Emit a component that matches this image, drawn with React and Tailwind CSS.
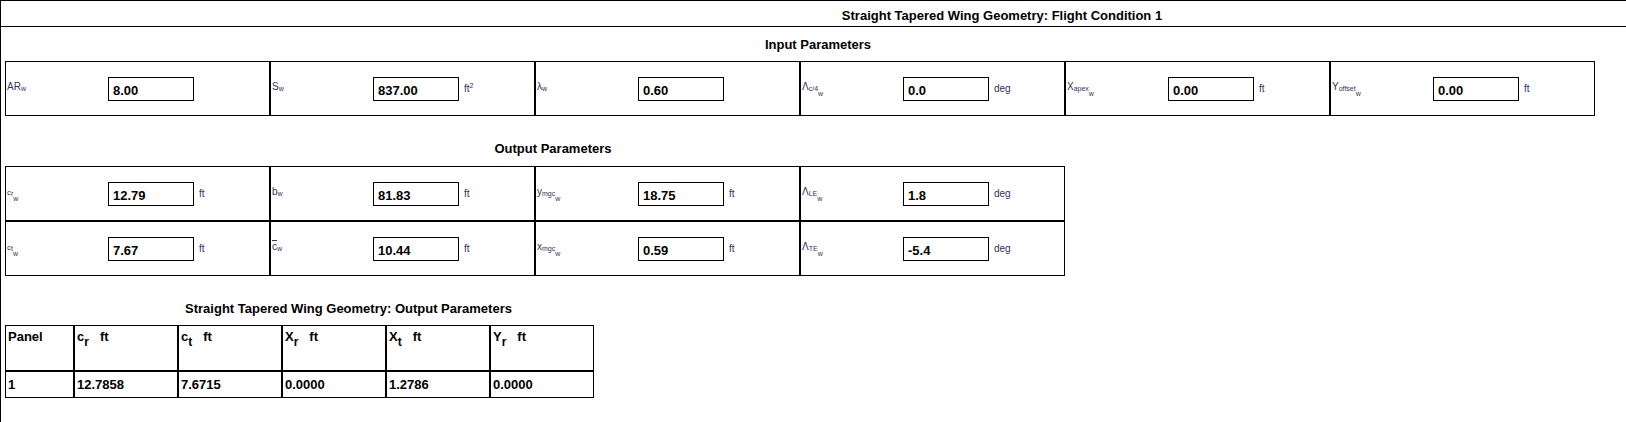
import React from "react";

function Sym({ base, sub, low, sup, baseCls = "text-[10px]", over = false, lowTop = "top-[6px]" }) {
  return (
    <span className="text-[#2e3560] whitespace-nowrap leading-none text-[10px]">
      <span className={baseCls + (over ? " overline" : "")}>{base}</span>
      {sub && <span className="text-[7px] relative top-[1px]">{sub}</span>}
      {low && <span className={"text-[7px] relative " + lowTop}>{low}</span>}
      {sup && <span className="text-[7px] relative -top-[4px]">{sup}</span>}
    </span>
  );
}

function Cell({ label, value, unit }) {
  return (
    <div className="w-[265px] h-[55px] border border-black flex items-center pl-[1px] shrink-0">
      <div className="w-[101px] shrink-0 leading-none text-[10px] pb-[3px]">{label}</div>
      <div className="w-[86px] h-[24px] shrink-0 border border-black flex items-center pl-[4px] pt-[3px] font-bold text-[13px] text-black leading-none">
        {value}
      </div>
      {unit && <span className="ml-[5px] leading-none text-[10px] pt-[1px]">{unit}</span>}
    </div>
  );
}

const ft = <Sym base="ft" />;
const deg = <Sym base="deg" />;

const inputs = [
  { label: <Sym base="AR" sub="w" />, value: "8.00", unit: null },
  { label: <Sym base="S" sub="w" />, value: "837.00", unit: <Sym base="ft" sup="2" /> },
  { label: <Sym base="λ" sub="w" />, value: "0.60", unit: null },
  { label: <Sym base="Λ" sub="c/4" low="w" />, value: "0.0", unit: deg },
  { label: <Sym base="X" sub="apex" low="w" />, value: "0.00", unit: ft },
  { label: <Sym base="Y" sub="offset" low="w" />, value: "0.00", unit: ft },
];

const out1 = [
  { label: <Sym base="c" baseCls="text-[8px]" sub="r" low="w" />, value: "12.79", unit: ft },
  { label: <Sym base="b" sub="w" />, value: "81.83", unit: ft },
  { label: <Sym base="y" sub="mgc" low="w" />, value: "18.75", unit: ft },
  { label: <Sym base="Λ" sub="LE" low="w" />, value: "1.8", unit: deg },
];

const out2 = [
  { label: <Sym base="c" baseCls="text-[8px]" sub="t" low="w" />, value: "7.67", unit: ft },
  { label: <Sym base="c" over sub="w" />, value: "10.44", unit: ft },
  { label: <Sym base="x" sub="mgc" low="w" />, value: "0.59", unit: ft },
  { label: <Sym base="Λ" sub="TE" low="w" />, value: "-5.4", unit: deg },
];

function Hd({ b, s }) {
  return (
    <span className="whitespace-nowrap">
      <span>{b}</span>
      <span className="relative top-[5px] text-[12px]">{s}</span>
      <span className="ml-[11px]">ft</span>
    </span>
  );
}

const headers = [
  { w: "w-[69px]", c: "Panel" },
  { w: "w-[104px]", c: <Hd b="c" s="r" /> },
  { w: "w-[104px]", c: <Hd b="c" s="t" /> },
  { w: "w-[104px]", c: <Hd b="X" s="r" /> },
  { w: "w-[104px]", c: <Hd b="X" s="t" /> },
  { w: "w-[104px]", c: <Hd b="Y" s="r" /> },
];

const data = ["1", "12.7858", "7.6715", "0.0000", "1.2786", "0.0000"];

export default function App() {
  return (
    <div className="w-full h-[422px] overflow-hidden bg-white border-l border-t border-black font-['Liberation_Sans',Arial,sans-serif] text-black">
      <div className="h-[26px] border-b border-black flex items-center justify-center pl-[377px] pt-[4px] font-bold text-[13px] leading-[16px] whitespace-nowrap">
        Straight Tapered Wing Geometry: Flight Condition 1
      </div>
      <div className="pl-[4px]">
        <div className="h-[34px] pl-[5px] pt-[10px] text-center font-bold text-[13px] leading-[16px]">
          Input Parameters
        </div>
        <div className="flex">
          {inputs.map((c, i) => (
            <Cell key={i} {...c} />
          ))}
        </div>
        <div className="w-[1096px] h-[50px] pt-[25px] text-center font-bold text-[13px] leading-[16px]">
          Output Parameters
        </div>
        <div className="flex">
          {out1.map((c, i) => (
            <Cell key={i} {...c} />
          ))}
        </div>
        <div className="flex">
          {out2.map((c, i) => (
            <Cell key={i} {...c} />
          ))}
        </div>
        <div className="w-[687px] h-[49px] pt-[25px] text-center font-bold text-[13px] leading-[16px] whitespace-nowrap">
          Straight Tapered Wing Geometry: Output Parameters
        </div>
        <div className="flex font-bold text-[13px] leading-[16px]">
          {headers.map((h, i) => (
            <div key={i} className={h.w + " h-[46px] shrink-0 border border-black pl-[2px] pt-[3px]"}>
              {h.c}
            </div>
          ))}
        </div>
        <div className="flex font-bold text-[13px] leading-[16px]">
          {data.map((d, i) => (
            <div key={i} className={headers[i].w + " h-[27px] shrink-0 border border-black pl-[2px] pt-[1px] flex items-center"}>
              {d}
            </div>
          ))}
        </div>
      </div>
    </div>
  );
}
